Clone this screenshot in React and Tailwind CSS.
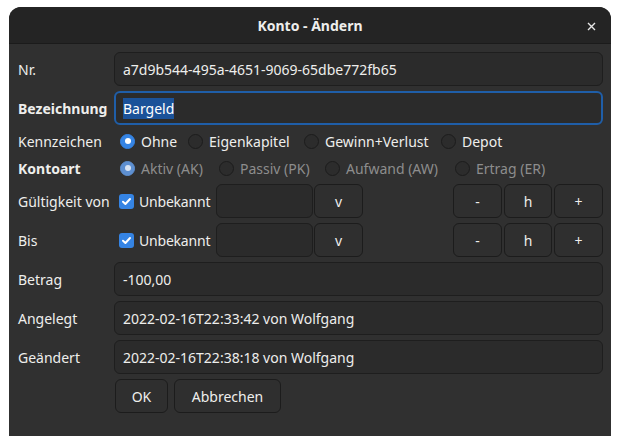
import React from 'react';

const font = { fontFamily: '"Noto Sans", "Liberation Sans", sans-serif' };

const Radio = ({ checked, disabled, label, w }) => (
  <label className={`flex items-center gap-[6px] ${w}`}>
    <span
      className={`flex h-[15px] w-[15px] shrink-0 items-center justify-center rounded-full border ${
        checked
          ? disabled
            ? 'border-[#5d8fd0] bg-[#5d8fd0]'
            : 'border-[#3584e4] bg-[#3584e4]'
          : 'border-[#1c1c1c] bg-[#2c2c2c]'
      }`}
    >
      {checked && (
        <span className={`h-[6px] w-[6px] rounded-full ${disabled ? 'bg-[#d8e3f2]' : 'bg-white'}`} />
      )}
    </span>
    <span className={disabled ? 'text-[#8d8d8d]' : 'text-[#eeeeec]'}>{label}</span>
  </label>
);

const Check = () => (
  <span className="flex h-[15px] w-[15px] shrink-0 items-center justify-center rounded-[3px] bg-[#3584e4]">
    <svg width="11" height="11" viewBox="0 0 11 11" fill="none">
      <path d="M2 5.8 L4.4 8 L9 3" stroke="white" strokeWidth="2" strokeLinecap="round" strokeLinejoin="round" />
    </svg>
  </span>
);

const Field = ({ children }) => (
  <div className="flex h-[34px] items-center rounded-[6px] border border-[#1e1e1e] bg-[#2b2b2b] px-[8px]">
    {children}
  </div>
);

const Btn = ({ children, w }) => (
  <button className={`flex h-[34px] ${w} items-center justify-center rounded-[6px] border border-[#1c1c1c] bg-[#2f2f2f] text-[#eeeeec]`}>
    {children}
  </button>
);

const DateRow = () => (
  <div className="flex h-[34px] items-center">
    <div className="ml-[5px] flex w-[97px] items-center gap-[5px] tracking-[-0.2px]">
      <Check />
      <span>Unbekannt</span>
    </div>
    <div className="h-[34px] w-[97px] rounded-[6px] border border-[#1e1e1e] bg-[#2b2b2b]" />
    <div className="ml-[1px]">
      <Btn w="w-[49px]">v</Btn>
    </div>
    <div className="ml-auto flex gap-[2px]">
      <Btn w="w-[49px]">-</Btn>
      <Btn w="w-[48px]">h</Btn>
      <Btn w="w-[49px]">+</Btn>
    </div>
  </div>
);

const rows = [
  { label: 'Betrag', value: '-100,00' },
  { label: 'Angelegt', value: '2022-02-16T22:33:42 von Wolfgang' },
  { label: 'Geändert', value: '2022-02-16T22:38:18 von Wolfgang' },
];

export default function App() {
  return (
    <div className="h-[445px] w-[620px] bg-white pl-[9px] pt-[7px] text-[14px] text-[#eeeeec]" style={font}>
      <div className="flex h-[429px] w-[602px] flex-col overflow-hidden rounded-t-[12px] bg-[#303030]">
        {/* title bar */}
        <div className="relative flex h-[37px] shrink-0 items-center justify-center border-b border-[#1b1b1b] bg-[#242424]">
          <span className="font-bold">Konto - Ändern</span>
          <svg className="absolute right-[15px] top-[15px]" width="9" height="9" viewBox="0 0 9 9">
            <path d="M1 1 L8 8 M8 1 L1 8" stroke="#e6e6e6" strokeWidth="1.4" />
          </svg>
        </div>

        <div className="grid grid-cols-[96px_1fr] gap-y-[5px] pl-[9px] pr-[8px] pt-[8px]">
          <div className="flex items-center">Nr.</div>
          <Field>a7d9b544-495a-4651-9069-65dbe772fb65</Field>

          <div className="flex items-center font-bold">Bezeichnung</div>
          <div className="flex h-[34px] items-center rounded-[6px] border-2 border-[#1f5ea8] bg-[#2b2b2b] px-[7px]">
            <span className="bg-[#1b5299] text-white">Bargeld</span>
          </div>

          <div className="flex h-[22px] items-center">Kennzeichen</div>
          <div className="flex h-[22px] items-center pl-[6px]">
            <Radio checked label="Ohne" w="w-[68px]" />
            <Radio label="Eigenkapitel" w="w-[116px]" />
            <Radio label="Gewinn+Verlust" w="w-[137px]" />
            <Radio label="Depot" />
          </div>

          <div className="flex h-[22px] items-center font-bold">Kontoart</div>
          <div className="flex h-[22px] items-center pl-[6px]">
            <Radio checked disabled label="Aktiv (AK)" w="w-[99px]" />
            <Radio disabled label="Passiv (PK)" w="w-[106px]" />
            <Radio disabled label="Aufwand (AW)" w="w-[130px]" />
            <Radio disabled label="Ertrag (ER)" />
          </div>

          <div className="flex items-center">Gültigkeit von</div>
          <DateRow />

          <div className="flex items-center">Bis</div>
          <DateRow />

          {rows.map((r) => (
            <React.Fragment key={r.label}>
              <div className="flex items-center">{r.label}</div>
              <Field>{r.value}</Field>
            </React.Fragment>
          ))}

          <div />
          <div className="flex gap-[6px] pl-[1px]">
            <Btn w="w-[53px]">OK</Btn>
            <Btn w="w-[107px]">Abbrechen</Btn>
          </div>
        </div>
      </div>
    </div>
  );
}
